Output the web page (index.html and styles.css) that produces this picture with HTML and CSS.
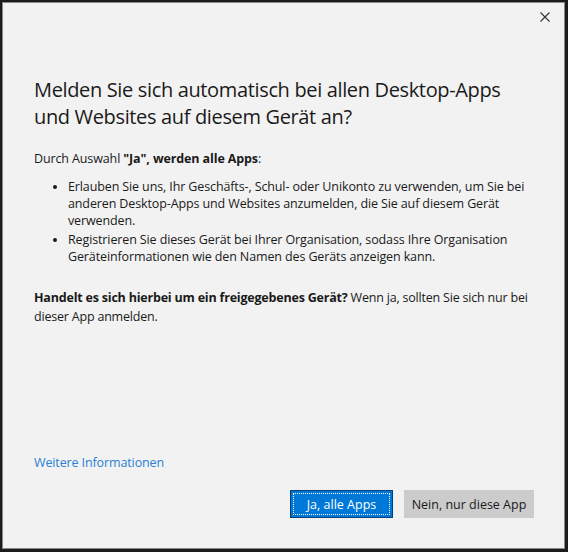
FILE: index.html
```html
<!DOCTYPE html>
<html lang="de">
<head>
<meta charset="utf-8">
<link rel="stylesheet" href="styles.css">
</head>
<body>
<div class="frame">
  <div class="titlebar">
    <button class="close" aria-label="Schließen">
      <svg width="10" height="10" viewBox="0 0 10 10"><path d="M0.5 0.5 L9.5 9.5 M9.5 0.5 L0.5 9.5" stroke="#333" stroke-width="1.1" fill="none"/></svg>
    </button>
  </div>
  <div class="content">
    <h1 class="title">Melden Sie sich automatisch bei allen Desktop-Apps und Websites auf diesem Gerät an?</h1>
    <p class="lead">Durch Auswahl <b>"Ja", werden alle Apps</b>:</p>
    <ul class="list">
      <li>Erlauben Sie uns, Ihr Geschäfts-, Schul- oder Unikonto zu verwenden, um Sie bei anderen Desktop-Apps und Websites anzumelden, die Sie auf diesem Gerät verwenden.</li>
      <li>Registrieren Sie dieses Gerät bei Ihrer Organisation, sodass Ihre Organisation Geräteinformationen wie den Namen des Geräts anzeigen kann.</li>
    </ul>
    <p class="shared"><b>Handelt es sich hierbei um ein freigegebenes Gerät?</b> Wenn ja, sollten Sie sich nur bei dieser App anmelden.</p>
    <div class="spacer"></div>
    <a class="more" href="#">Weitere Informationen</a>
    <div class="buttons">
      <button class="btn primary"><span class="focus">Ja, alle Apps</span></button>
      <button class="btn secondary">Nein, nur diese App</button>
    </div>
  </div>
</div>
</body>
</html>
```
FILE: styles.css
```css
html, body {
  margin: 0;
  padding: 0;
  background: #f2f2f2;
}
body {
  font-family: "Segoe UI", "Open Sans", sans-serif;
  color: #1a1a1a;
}
.frame {
  box-sizing: border-box;
  width: 568px;
  height: 552px;
  border-top: 2px solid #1c1c1c;
  border-left: 2px solid #1c1c1c;
  border-right: 3px solid #1c1c1c;
  border-bottom: 3px solid #1c1c1c;
  box-shadow: inset 1px 1px 0 #8a8a8a, inset -1px -1px 0 #8a8a8a;
  background: #f2f2f2;
  display: flex;
  flex-direction: column;
}
.titlebar {
  height: 30px;
  display: flex;
  justify-content: flex-end;
  align-items: flex-start;
}
.close {
  border: 0;
  background: transparent;
  padding: 0;
  width: 28px;
  height: 28px;
  margin-top: 1px;
  margin-right: 6px;
  display: flex;
  align-items: center;
  justify-content: center;
}
.content {
  flex: 1;
  display: flex;
  flex-direction: column;
  padding: 44px 31px 31px 32px;
}
.title {
  margin: 0;
  font-weight: 400;
  font-size: 20px;
  letter-spacing: -0.35px;
  line-height: 27px;
  color: #1a1a1a;
}
.lead, .list, .more {
  letter-spacing: -0.12px;
}
.lead {
  margin: 20px 0 0;
  font-size: 12.5px;
  line-height: 17px;
}
.list {
  margin: 11px 0 0;
  padding-left: 34px;
  font-size: 12.5px;
  line-height: 17px;
}
.list li {
  margin: 0 0 2px;
}
.shared {
  margin: 21px -6px 0 0;
  font-size: 12.5px;
  line-height: 19px;
  letter-spacing: -0.2px;
}
.spacer { flex: 1; }
.more {
  font-size: 12.5px;
  line-height: 17px;
  color: #2a7fd4;
  text-decoration: none;
  align-self: flex-start;
}
.buttons {
  display: flex;
  justify-content: flex-end;
  gap: 11px;
  margin-top: 19px;
}
.btn {
  font-family: inherit;
  font-size: 12.5px;
  height: 28px;
  padding: 0;
  box-sizing: border-box;
  cursor: pointer;
}
.primary {
  width: 103px;
  background: #0078d7;
  color: #ffffff;
  border: 1px solid #003f7a;
  padding: 2px;
  display: flex;
}
.primary .focus {
  flex: 1;
  border: 1px dotted #ffffff;
  display: flex;
  align-items: center;
  justify-content: center;
}
.secondary {
  width: 130px;
  background: #cccccc;
  color: #1a1a1a;
  border: 1px solid #cccccc;
}
```
